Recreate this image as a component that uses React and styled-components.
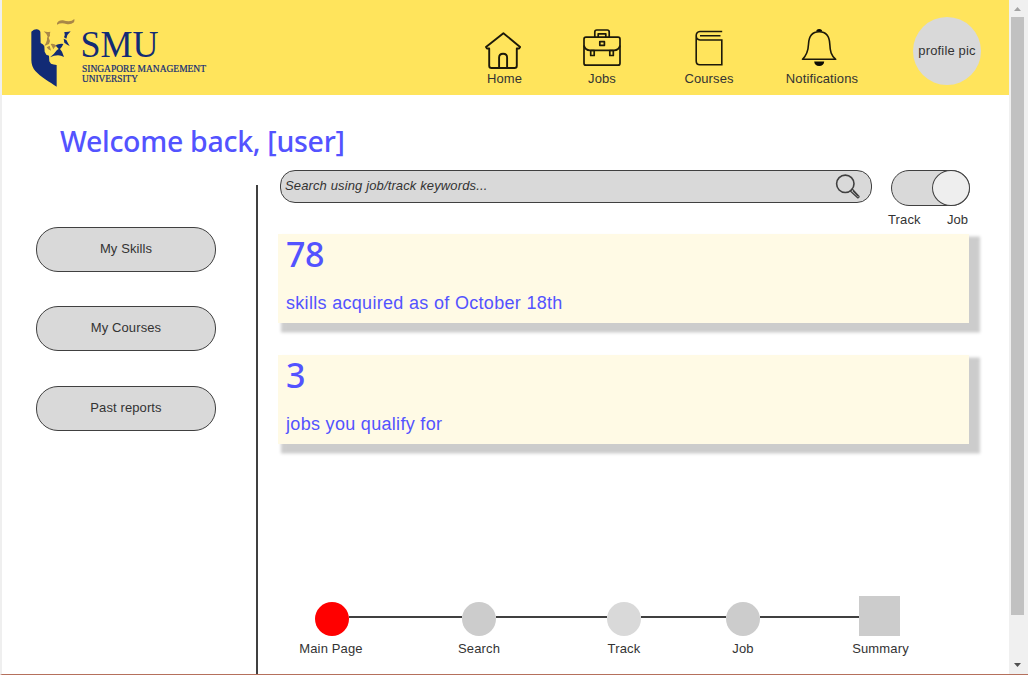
import React from "react";
import styled, { createGlobalStyle } from "styled-components";

const GlobalStyle = createGlobalStyle`
  * { box-sizing: border-box; }
  body {
    margin: 0;
    overflow: hidden;
    background: #fff;
    color: #333;
    font-family: "Liberation Sans", Arial, sans-serif;
    font-size: 13px;
    line-height: 15px;
  }
  svg { display: block; }
`;

const Window = styled.div`
  display: flex;
  height: 675px;
  width: 1028px;
  border-left: 2px solid #efefef;
  border-bottom: 1px solid #b5705c;
`;

const Page = styled.div`
  width: 1007px;
  display: flex;
  flex-direction: column;
`;

const Header = styled.header`
  height: 95px;
  flex: none;
  display: flex;
  background: #ffe45c;
`;

const LogoLink = styled.div`
  width: 454.5px;
  flex: none;
`;

const Nav = styled.nav`
  display: flex;
`;

const NavItem = styled.div`
  width: ${(p) => p.$width}px;
  padding-top: 28px;
  display: flex;
  flex-direction: column;
  align-items: center;
`;

const IconBox = styled.div`
  height: 43px;
  margin-left: ${(p) => p.$shift || 0}px;
`;

const Label = styled.span`
  white-space: nowrap;
  letter-spacing: ${(p) => p.$spacing || 0}px;
`;

const Avatar = styled.div`
  width: 68px;
  height: 68px;
  margin: 17px 0 0 35.5px;
  padding-bottom: 2px;
  border-radius: 50%;
  background: #d9d9d9;
  display: flex;
  align-items: center;
  justify-content: center;
  white-space: nowrap;
  letter-spacing: 0.15px;
`;

const Title = styled.h1`
  margin: 0;
  height: 75px;
  flex: none;
  padding: 26px 0 0 58px;
  font: 500 28.5px/40px "Noto Sans", "Open Sans", sans-serif;
  color: #5353ff;
  white-space: nowrap;
  letter-spacing: -0.3px;
`;

const Body = styled.div`
  display: flex;
  flex: 1;
  min-height: 0;
`;

const Sidebar = styled.aside`
  width: 256px;
  margin-top: 15px;
  padding: 42px 0 0 34px;
  border-right: 2px solid #404040;
  display: flex;
  flex-direction: column;
  gap: 34.4px;
`;

const SideButton = styled.button`
  width: 180px;
  height: 45px;
  padding: 0 0 2px;
  border: 1px solid #404040;
  border-radius: 22px;
  background: #d9d9d9;
  color: #333;
  font: inherit;
  letter-spacing: 0.1px;
`;

const Content = styled.main`
  flex: 1;
  padding-left: 20px;
  display: flex;
  flex-direction: column;
`;

const SearchRow = styled.div`
  height: 64px;
  flex: none;
  display: flex;
  padding-left: 2px;
`;

const SearchBox = styled.div`
  width: 592px;
  height: 33px;
  padding: 0 10px 0 4px;
  border: 1px solid #404040;
  border-radius: 15px;
  background: #d9d9d9;
  display: flex;
  align-items: center;
  justify-content: space-between;
  font-style: italic;
`;

const Placeholder = styled.span`
  padding-bottom: 2px;
  white-space: nowrap;
  letter-spacing: 0.13px;
`;

const ToggleGroup = styled.div`
  margin-left: 16px;
  width: 82px;
`;

const Toggle = styled.div`
  width: 79px;
  height: 36px;
  margin-left: 3px;
  border: 1px solid #404040;
  border-radius: 18px;
  background: #d9d9d9;
  display: flex;
  justify-content: flex-end;
`;

const Knob = styled.div`
  width: 38px;
  height: 36px;
  margin: -1px;
  border: 1px solid #404040;
  border-radius: 50%;
  background: #eee;
`;

const ToggleLabels = styled.div`
  display: flex;
  justify-content: space-between;
  padding: 6px 2px 0 0;
`;

const Card = styled.section`
  width: 691px;
  height: 89px;
  margin-bottom: 32px;
  padding-left: 8px;
  background: #fffae5;
  color: #5353ff;
  box-shadow: 7px 5.5px 3px 4px #ccc;
`;

const Count = styled.div`
  height: 57px;
  font: 500 34px/40px "Noto Sans", "Open Sans", sans-serif;
  letter-spacing: -0.5px;
`;

const Caption = styled.div`
  font-size: 18px;
  line-height: 24px;
  white-space: nowrap;
  letter-spacing: 0.31px;
`;

const Stepper = styled.div`
  display: flex;
  margin: auto 0 18px 37px;
  align-items: flex-end;
`;

const Step = styled.div`
  width: ${(p) => (p.$square ? 41 : 34)}px;
  display: flex;
  flex-direction: column;
  align-items: center;
  gap: 5px;
`;

const StepLabel = styled(Label)`
  margin-left: ${(p) => p.$shift || 0}px;
`;

const Marker = styled.div`
  width: 100%;
  height: ${(p) => (p.$square ? 40 : 34)}px;
  border-radius: ${(p) => (p.$square ? 0 : "50%")};
  background: ${(p) => p.$color};
`;

const Connector = styled.div`
  width: ${(p) => p.$width}px;
  height: 2px;
  margin-bottom: 38px;
  background: #404040;
`;

const Scrollbar = styled.div`
  width: 19px;
  background: #f0f0f0;
  display: flex;
  flex-direction: column;
  padding: 0 4px 0 2px;
`;

const Arrow = styled.div`
  height: 17px;
  display: flex;
  justify-content: center;
  padding-top: ${(p) => p.$top}px;
`;

const Thumb = styled.div`
  height: 598px;
  margin-bottom: 42px;
  background: #c1c1c1;
`;

const Logo = () => (
  <svg width="240" height="95" viewBox="2 0 240 95">
    <g transform="scale(.33333)">
      <path fill="#122b75" d="M94 95q9-8 17-7 8 1 10 7l1 34q9 4 11 10l1 16 5 9 8 3 1 17 5 7q7 2 17 4v65c-21-14-49-30-64-47q-12-14-12-33z" />
      <path fill="#122b75" d="M193 96q10 1 19-2-11 9-13 22l-7-4q4-8 1-16zM191 116l8 4q4 8 10 18-9-5-16-10zM166 136q12-6 24-4-3 8-10 15l6 8 6 16q-9-5-18-5-12 0-24 6 12-9 21-22l5-3z" />
      <path fill="#a98747" d="M171 70q4-10 18-9 9 3 17 3 10 0 17-7 1 6-1 10-10 8-23 5-15-5-28 2zM131 94q10 3 20 1-2 6-1 12l-4 6 4 10-3 9-14 6q6-9 8-18-1-8 2-10-3-9-12-16zM152 132q10-2 18 5-7 3-10 11l-3-7zM140 142l9-5 4 15-8-4z" />
    </g>
    <text x="80.5" y="57" textLength="78" lengthAdjust="spacingAndGlyphs" fontFamily="Liberation Serif, serif" fontSize="38" fill="#122b75">SMU</text>
    <g fontFamily="Liberation Serif, serif" fontSize="9.4" fill="#122b75" stroke="#122b75" strokeWidth=".2">
      <text x="82" y="71.7" textLength="124" lengthAdjust="spacingAndGlyphs">SINGAPORE MANAGEMENT</text>
      <text x="82" y="82" textLength="56" lengthAdjust="spacingAndGlyphs">UNIVERSITY</text>
    </g>
  </svg>
);

const HomeIcon = () => (
  <svg width="38" height="43" fill="none" stroke="#1c190a" strokeWidth="1.9" strokeLinejoin="round" strokeLinecap="round">
    <path d="M5.2 20.5v17.2q0 2.300 2.300 2.300h23q2.300 0 2.300-2.300V20.5h2.300l1-1.600L19.400 5.200 2 18.900l1 1.600zM15.100 40V29.500q0-3.800 4-3.800t4 3.800V40" />
  </svg>
);

const JobsIcon = () => (
  <svg width="38" height="43" fill="none" stroke="#1c190a" strokeWidth="1.7" strokeLinejoin="round">
    <path d="M3 9.200h32q2 0 2 2v24q0 2-2 2H3q-2 0-2-2v-24q0-2 2-2z" />
    <path d="M1 17.500q1 4.800 6 4.800h24q5 0 6-4.800M11.800 9V4q0-2 2-2h10.400q2 0 2 2v5M15.200 9V5.800h7.600V9" />
    <path d="M16.800 13.700h4.600v3.600h-4.600zM7.700 22.500h3.500v5H7.700zM26.800 22.500h3.500v5h-3.500z" />
  </svg>
);

const CoursesIcon = () => (
  <svg width="28" height="43" fill="none" stroke="#1c190a" strokeWidth="1.6">
    <path d="M27.200 3.500H5Q1.200 3.800 1.200 7.600V33q0 3.700 3.600 3.700h22V12H5Q1.200 11.700 1.200 7.800M5 7.700h20.500" />
  </svg>
);

const BellIcon = () => (
  <svg width="36" height="43" fill="none" stroke="#1c190a" strokeWidth="1.6" strokeLinejoin="round">
    <path d="M1.500 31.300c4.200-4 5.700-8 6-15C7.800 8 12 3.800 18.200 3.800S28.500 8 28.800 16.300c.3 7 1.300 11 5.900 15z" />
    <path fill="#0b0a04" stroke="none" d="M15.200 3.600q0-2.400 3-2.600 3 .2 3 2.600zM13.200 33.600h10q-.4 4.400-5 4.400t-5-4.400z" />
  </svg>
);

const SearchIcon = () => (
  <svg width="26" height="27" viewBox="0 0 26 27" fill="none" stroke="#404040">
    <circle cx="10.300" cy="10.800" r="8.700" strokeWidth="1.600" />
    <path strokeWidth="1.200" strokeLinejoin="round" d="M15.300 18l7.300 6.800q1.400.3 1.500-1.500l-6.900-7.300zM18 17.800l5 5.200" />
  </svg>
);

const navItems = [
  { label: "Home", width: 96, icon: <HomeIcon />, shift: -4 },
  { label: "Jobs", width: 99, icon: <JobsIcon /> },
  { label: "Courses", width: 115, icon: <CoursesIcon />, shift: -1 },
  { label: "Notifications", width: 111, icon: <BellIcon />, shift: -7 },
];

const steps = [
  { label: "Main Page", color: "#f00", next: 113, shift: -2 },
  { label: "Search", color: "#ccc", next: 111 },
  { label: "Track", color: "#d9d9d9", next: 85 },
  { label: "Job", color: "#ccc", next: 99 },
  { label: "Summary", color: "#ccc", square: true, shift: 2 },
];

export default function App() {
  return (
    <Window>
      <GlobalStyle />
      <Page>
        <Header>
          <LogoLink><Logo /></LogoLink>
          <Nav>
            {navItems.map((n) => (
              <NavItem key={n.label} $width={n.width}>
                <IconBox $shift={n.shift}>{n.icon}</IconBox>
                <Label $spacing={0.12}>{n.label}</Label>
              </NavItem>
            ))}
          </Nav>
          <Avatar>profile pic</Avatar>
        </Header>
        <Title>Welcome back, [user]</Title>
        <Body>
          <Sidebar>
            <SideButton>My Skills</SideButton>
            <SideButton>My Courses</SideButton>
            <SideButton>Past reports</SideButton>
          </Sidebar>
          <Content>
            <SearchRow>
              <SearchBox>
                <Placeholder>Search using job/track keywords...</Placeholder>
                <SearchIcon />
              </SearchBox>
              <ToggleGroup>
                <Toggle><Knob /></Toggle>
                <ToggleLabels>
                  <Label $spacing={0.15}>Track</Label>
                  <Label>Job</Label>
                </ToggleLabels>
              </ToggleGroup>
            </SearchRow>
            <Card>
              <Count>78</Count>
              <Caption>skills acquired as of October 18th</Caption>
            </Card>
            <Card>
              <Count>3</Count>
              <Caption>jobs you qualify for</Caption>
            </Card>
            <Stepper>
              {steps.map((s) => (
                <React.Fragment key={s.label}>
                  <Step $square={s.square}>
                    <Marker $square={s.square} $color={s.color} />
                    <StepLabel $spacing={0.15} $shift={s.shift}>{s.label}</StepLabel>
                  </Step>
                  {s.next && <Connector $width={s.next} />}
                </React.Fragment>
              ))}
            </Stepper>
          </Content>
        </Body>
      </Page>
      <Scrollbar>
        <Arrow $top={7}>
          <svg width="7" height="4"><path fill="#a3a3a3" d="M0 4L3.500 0 7 4z" /></svg>
        </Arrow>
        <Thumb />
        <Arrow $top={6}>
          <svg width="7" height="4"><path fill="#505050" d="M0 0h7L3.500 4z" /></svg>
        </Arrow>
      </Scrollbar>
    </Window>
  );
}
